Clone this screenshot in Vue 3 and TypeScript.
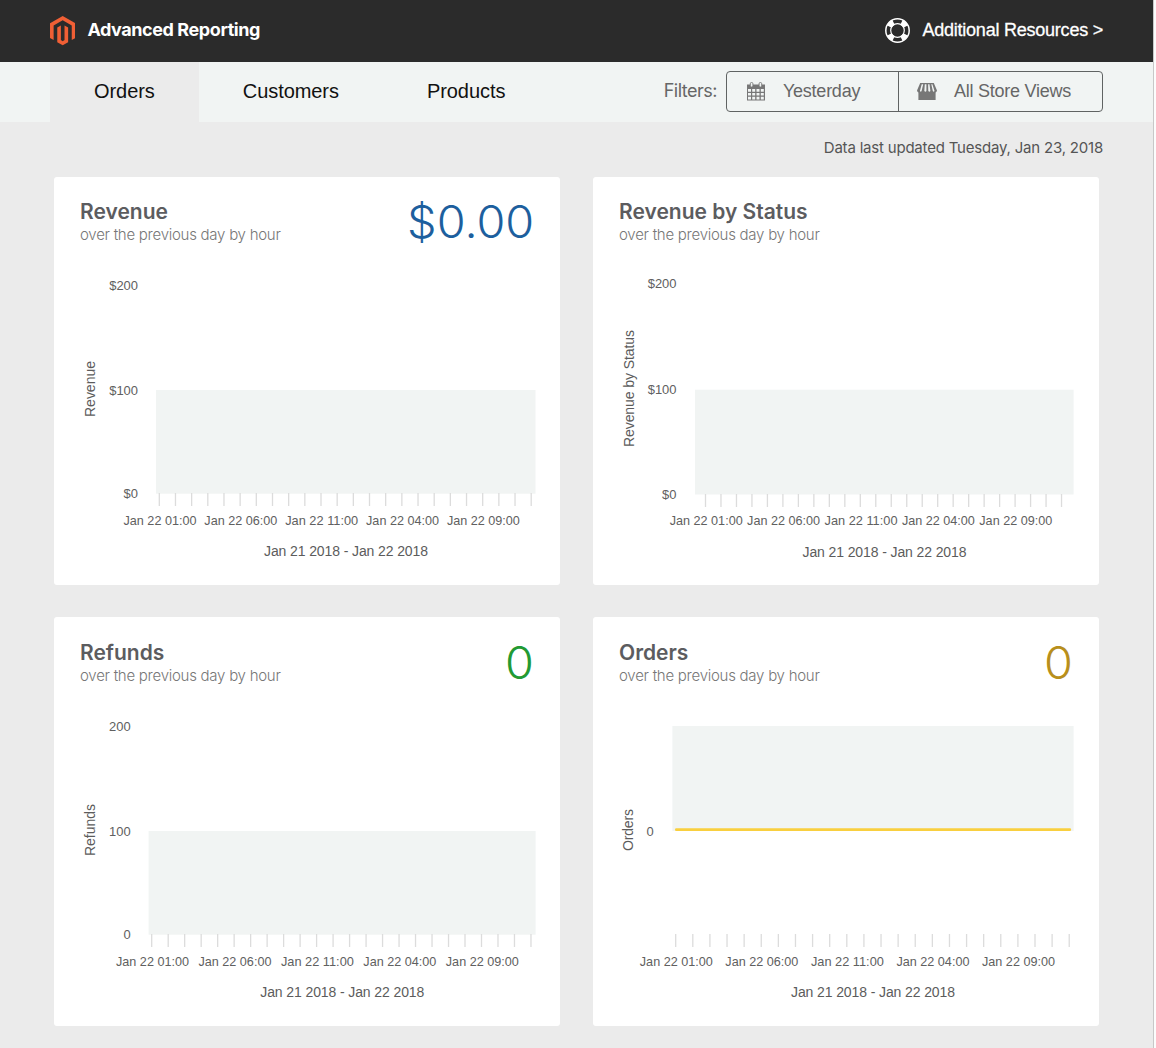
<script setup lang="ts">
interface YLabel { text: string; x: number; y: number }
interface Chart {
  title: string
  total?: string
  color?: string
  height: number
  plot: { x: number; y: number; w: number; h: number }
  yLabels: YLabel[]
  axis: { x: number; y: number; len: number }
  tickStart: number
  tickStep: number
  tickY: number
  labelStart: number
  range: { x: number; y: number }
  line?: { x1: number; x2: number; y: number }
}

const tabs = ['Orders', 'Customers', 'Products']
const hours = ['01:00', '06:00', '11:00', '04:00', '09:00']

const charts: Chart[] = [
  {
    title: 'Revenue', total: '$0.00', color: '#1d5f9e', height: 408,
    plot: { x: 102, y: 213, w: 379.5, h: 103.7 },
    yLabels: [{ text: '$200', x: 84, y: 113 }, { text: '$100', x: 84, y: 218 }, { text: '$0', x: 84, y: 321 }],
    axis: { x: 41, y: 212, len: 56 },
    tickStart: 105.3, tickStep: 16.17, tickY: 316, labelStart: 106,
    range: { x: 292, y: 379 },
  },
  {
    title: 'Revenue by Status', height: 408,
    plot: { x: 102, y: 212.7, w: 378.6, h: 104.8 },
    yLabels: [{ text: '$200', x: 83.5, y: 111 }, { text: '$100', x: 83.5, y: 217 }, { text: '$0', x: 83.5, y: 322 }],
    axis: { x: 41, y: 211.5, len: 117 },
    tickStart: 112.5, tickStep: 15.48, tickY: 317, labelStart: 113.2,
    range: { x: 291.5, y: 380 },
  },
  {
    title: 'Refunds', total: '0', color: '#229a33', height: 409,
    plot: { x: 94.6, y: 214, w: 387, h: 103.7 },
    yLabels: [{ text: '200', x: 76.7, y: 114 }, { text: '100', x: 76.7, y: 219 }, { text: '0', x: 76.7, y: 322 }],
    axis: { x: 41, y: 213, len: 52 },
    tickStart: 97.7, tickStep: 16.49, tickY: 317, labelStart: 98.5,
    range: { x: 288.3, y: 380 },
  },
  {
    title: 'Orders', total: '0', color: '#b88f1c', height: 409,
    plot: { x: 79.4, y: 109, w: 401.2, h: 105 },
    yLabels: [{ text: '0', x: 60.8, y: 219 }],
    axis: { x: 40, y: 213, len: 42 },
    tickStart: 82.7, tickStep: 17.11, tickY: 317, labelStart: 83.3,
    range: { x: 280, y: 380 },
    line: { x1: 83.3, x2: 476.8, y: 212.7 },
  },
]
</script>

<template>
  <div class="page">
    <header class="topbar">
      <div class="brand">
        <svg width="25.4" height="29.3" viewBox="1.609 0 20.782 24" fill="#f05f35">
          <path d="M12 24l-4.455-2.573v-12l2.97-1.715v12.001l1.485.902 1.485-.902V7.712l2.971 1.715v12L12 24zM22.391 6v12l-2.969 1.714V7.712L12 3.43 4.574 7.712v12.002L1.609 18V6L12 0l10.391 6z" />
        </svg>
        <span class="brand-name">Advanced Reporting</span>
      </div>
      <a class="resources">
        <svg width="25" height="25" viewBox="0 0 25 25" fill="none" stroke="#fff">
          <circle cx="12.5" cy="12.5" r="11.7" stroke-width="1.5" />
          <circle cx="12.5" cy="12.5" r="6.8" stroke-width="1.2" />
          <circle cx="12.5" cy="12.5" r="9.2" stroke-width="5.4" pathLength="360" stroke-dasharray="38 52" stroke-dashoffset="-26" />
        </svg>
        <span>Additional Resources &gt;</span>
      </a>
    </header>

    <nav class="nav">
      <div class="tabs">
        <a v-for="(tab, i) in tabs" :key="tab" class="tab" :class="{ active: i === 0 }">{{ tab }}</a>
      </div>
      <div class="filters">
        <span class="filters-label">Filters:</span>
        <div class="filter-group">
          <button class="filter date">
            <svg width="18" height="19" viewBox="0 0 18 19">
              <path d="M0 2.5h18v16H0z" fill="#777" />
              <path d="M1 7h3v2.700H1zM5.200 7h3v2.700h-3zM9.500 7h3v2.700h-3zM13.800 7h3v2.700h-3zM1 10.900h3v2.700H1zM5.200 10.900h3v2.700h-3zM9.500 10.900h3v2.700h-3zM13.800 10.900h3v2.700h-3zM1 14.800h3v2.700H1zM5.200 14.800h3v2.700h-3zM9.500 14.800h3v2.700h-3zM13.800 14.800h3v2.700h-3z" fill="#f1f4f3" />
              <rect x="3.300" y="0.500" width="2.600" height="4.500" rx="1.200" fill="#f1f4f3" stroke="#777" stroke-width="0.900" />
              <rect x="12.100" y="0.500" width="2.600" height="4.500" rx="1.200" fill="#f1f4f3" stroke="#777" stroke-width="0.900" />
            </svg>
            <span>Yesterday</span>
          </button>
          <button class="filter store">
            <svg width="20" height="17" viewBox="0 0 20 17" fill="#777">
              <path d="M3.200 0h13.600L20 7.500q-.3 1.700-1.400 1.900V17H1.400V9.400Q.3 9.200 0 7.500z" />
              <path d="M4.700 1.300h1.500L4.600 8q-.8 1.300-1.700 0zM7.800 1.300h1.600V8q-.9 1.400-2.100 0zM11.100 1.300h1.400l.9 6.700q-.9 1.400-2.100 0zM14.300 1.300h1.100L17.500 8q-.8 1.300-1.700 0z" fill="#f1f4f3" />
            </svg>
            <span>All Store Views</span>
          </button>
        </div>
      </div>
    </nav>

    <p class="updated"><span>Data last updated Tuesday, Jan 23, 2018</span></p>

    <main class="grid">
      <section v-for="c in charts" :key="c.title" class="card" :style="{ height: c.height + 'px' }">
        <div class="card-head" :style="{ paddingTop: c.height - 408 + 'px' }">
          <div>
            <h2>{{ c.title }}</h2>
            <p class="sub">over the previous day by hour</p>
          </div>
          <span v-if="c.total" class="total" :style="{ color: c.color }">{{ c.total }}</span>
        </div>
        <svg class="chart" width="506" height="320" viewBox="0 80 506 320">
          <rect :x="c.plot.x" :y="c.plot.y" :width="c.plot.w" :height="c.plot.h" fill="#f1f4f3" />
          <line
            v-for="n in 24" :key="n"
            :x1="c.tickStart + (n - 1) * c.tickStep" :x2="c.tickStart + (n - 1) * c.tickStep"
            :y1="c.tickY" :y2="c.tickY + 13" stroke="#dcdcdc" stroke-width="1.3"
          />
          <line v-if="c.line" :x1="c.line.x1" :x2="c.line.x2" :y1="c.line.y" :y2="c.line.y" stroke="#f9cf3f" stroke-width="2.700" stroke-linecap="round" />
          <text
            v-for="l in c.yLabels" :key="l.text" class="tick" :x="l.x" :y="l.y" text-anchor="end"
            :textLength="l.text.length * 7.2" lengthAdjust="spacingAndGlyphs"
          >{{ l.text }}</text>
          <text
            v-for="(h, i) in hours" :key="h" class="tick" :x="c.labelStart + i * 5 * c.tickStep" y="348"
            :dy="c.height - 408" text-anchor="middle" textLength="73" lengthAdjust="spacingAndGlyphs"
          >Jan 22 {{ h }}</text>
          <text class="axis" :x="c.range.x" :y="c.range.y" text-anchor="middle" textLength="164">Jan 21 2018 - Jan 22 2018</text>
          <text
            class="axis" text-anchor="middle" :textLength="c.axis.len"
            :transform="`translate(${c.axis.x} ${c.axis.y}) rotate(-90)`"
          >{{ c.title }}</text>
        </svg>
      </section>
    </main>
  </div>
</template>

<style>
body { background: #fcfcfc; }
</style>

<style scoped>
.page {
  box-sizing: border-box;
  width: 1154px;
  height: 1048px;
  overflow: hidden;
  background: #ebebeb;
  border-right: 1px solid #c8c8c8;
  font-family: "Liberation Sans", Arial, sans-serif;
}
.topbar {
  display: flex;
  align-items: center;
  justify-content: space-between;
  height: 62px;
  padding: 0 50px;
  box-sizing: border-box;
  background: #2b2b2b;
  color: #fff;
}
.brand { display: flex; align-items: center; gap: 12px; }
.brand-name { padding-bottom: 2px; font: 700 18px/24px Inter, sans-serif; letter-spacing: -0.42px; }
.resources { display: flex; align-items: center; gap: 12px; padding-bottom: 1px; font-size: 18px; line-height: 24px; letter-spacing: -0.23px; -webkit-text-stroke: 0.3px #fff; }
.resources span { padding-bottom: 1px; }
.nav {
  display: flex;
  justify-content: space-between;
  height: 60px;
  padding: 0 50px;
  background: #f1f4f3;
}
.tabs { display: flex; }
.tab { padding: 0 44px; font-size: 20px; line-height: 58px; letter-spacing: -0.06px; color: #111; }
.tab.active { background: #ebebeb; }
.filters { display: flex; align-items: flex-start; padding-top: 9px; color: #666; }
.filters-label { margin-right: 9px; font: 400 18px/40px Inter, sans-serif; letter-spacing: -0.5px; }
.filter-group { display: flex; box-sizing: border-box; width: 377px; height: 41px; border: 1px solid #606363; border-radius: 4px; }
.filter {
  display: flex;
  align-items: center;
  margin: 0;
  border: 0;
  background: none;
  font: 18px/39px "Liberation Sans", Arial, sans-serif;
  letter-spacing: -0.25px;
  color: #666;
}
.filter span { white-space: nowrap; }
.date { width: 172px; padding: 0 0 0 20px; gap: 18px; border-right: 1px solid #606363; }
.store { flex: 1; padding: 0 0 0 18px; gap: 17px; }
.updated {
  height: 55px;
  margin: 0;
  padding: 0 50px;
  text-align: right;
  font: 400 15px/52px Inter, sans-serif;
  letter-spacing: -0.2px;
  color: #555;
}
.grid { display: grid; grid-template-columns: 506px 506px; gap: 32px 33px; padding: 0 0 0 54px; }
.card { background: #fff; border-radius: 3px; overflow: hidden; }
.card-head { display: flex; justify-content: space-between; height: 80px; padding: 0 26px; box-sizing: border-box; }
h2 { margin: 0; padding-top: 22px; font: 600 21px/26px Inter, sans-serif; color: #5c5c5f; }
.sub { margin: 0; font: 300 15px/20px Inter, sans-serif; letter-spacing: -0.26px; color: #777; }
.total { font: 300 45px/90px Inter, sans-serif; transform: scaleX(1.04); transform-origin: right; }
.chart { display: block; }
.tick { font-size: 13.600px; fill: #606060; }
.axis { font-size: 14px; fill: #5c5c5c; }
</style>
